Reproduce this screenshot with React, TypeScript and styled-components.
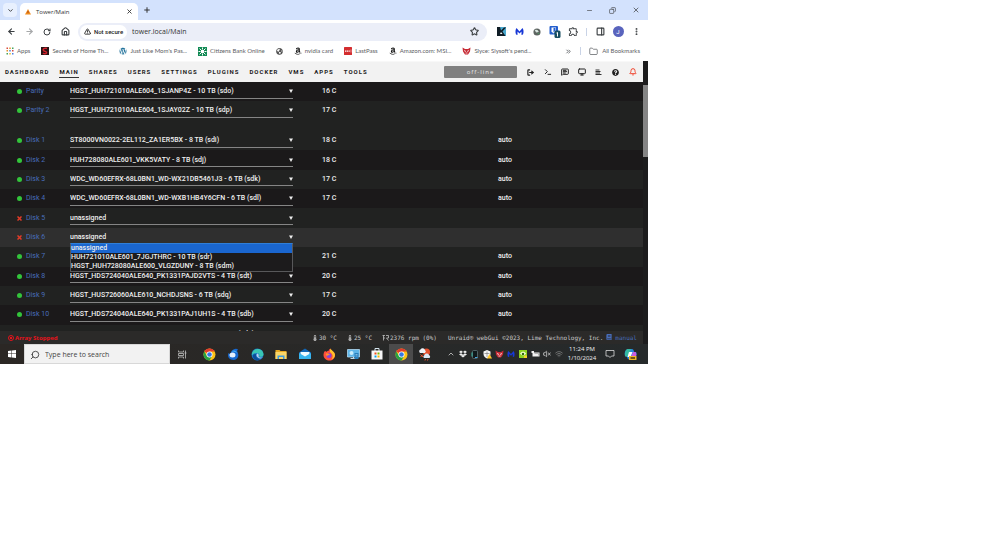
import React from "react";
import styled, { createGlobalStyle } from "styled-components";
import {
  ArrowLeft, ArrowRight, ChevronDown, ChevronUp, ChevronsRight, Copy, EllipsisVertical, Folder, House,
  Minus, PanelRight, Plus, RotateCw, Search, Star, Terminal, TriangleAlert, X, Bell, LogOut,
  MessageSquareText, Monitor, VolumeX, Wifi,
} from "lucide-react";
import { FaAmazon, FaBook, FaDropbox, FaQuestionCircle, FaWordpress, FaGlobeAmericas, FaThermometerHalf } from "react-icons/fa";
import { MdOutlineExtension } from "react-icons/md";

const Global = createGlobalStyle`
  *, *::before, *::after { box-sizing: border-box; }
  body { margin: 0; background: #fff; font-family: "Open Sans", "Noto Sans", sans-serif; }
  button, input, select { font: inherit; color: inherit; }
  button { display: inline-flex; align-items: center; justify-content: center; padding: 0; border: 0; background: none; }
  a { color: inherit; text-decoration: none; }
  svg { display: block; flex: none; }
`;

const Desktop = styled.div`
  width: 64.8%;
  display: flex;
  flex-direction: column;
  overflow: hidden;
`;

/* Browser chrome */
const TabStrip = styled.header`
  height: 20px;
  display: flex;
  align-items: center;
  padding-left: 3px;
  background: #d3e2fd;
  color: #333;
`;
const TabSearch = styled.button`
  && { width: 14px; height: 14px; border-radius: 4px; background: #e8f0fe; }
`;
const Tab = styled.div`
  align-self: flex-end;
  display: flex;
  align-items: center;
  gap: 5px;
  width: 118px;
  height: 17px;
  margin-left: 3px;
  padding: 0 5px;
  border-radius: 5px 5px 0 0;
  background: #fff;
  font: 6px/8px "Open Sans", sans-serif;
`;
const TabTitle = styled.span`
  flex: 1;
`;
const NewTab = styled.button`
  margin-left: 5px;
`;
const WindowButtons = styled.div`
  display: flex;
  margin-left: auto;
  padding-right: 1px;
`;
const WindowButton = styled.button`
  width: 23px;
  height: 20px;
`;
const Toolbar = styled.div`
  height: 23px;
  display: flex;
  align-items: center;
  padding: 0 3px 0 2px;
  background: #fff;
  color: #3c4043;
`;
const ToolButton = styled.button<{ $faded?: boolean }>`
  width: 18px;
  height: 18px;
  opacity: ${(p) => (p.$faded ? 0.45 : 1)};
`;
const Omnibox = styled.div`
  flex: 1;
  display: flex;
  align-items: center;
  gap: 5px;
  height: 18px;
  margin: 0 5px 0 4px;
  padding: 0 8px 0 2px;
  border-radius: 9px;
  background: #ebeef8;
`;
const SecurityChip = styled.button`
  && {
    gap: 3px;
    width: 47px;
    height: 14px;
    border-radius: 7px;
    background: #fff;
    font: 500 6px/8px Roboto, sans-serif;
    color: #222;
  }
`;
const Address = styled.input`
  flex: 1;
  min-width: 0;
  padding: 0;
  border: 0;
  outline: 0;
  background: none;
  && { font: 7px/10px "Open Sans", sans-serif; color: #333; }
`;
const Divider = styled.span`
  width: 1px;
  height: 8px;
  margin: 0 4px;
  background: #c9d3e6;
`;
const Avatar = styled.span`
  display: grid;
  place-items: center;
  width: 11px;
  height: 11px;
  border-radius: 50%;
  background: #5964bd;
  color: #fff;
  font: 6px/8px Roboto, sans-serif;
`;
const Bookmarks = styled.nav`
  height: 18px;
  display: flex;
  align-items: center;
  gap: 11px;
  padding: 0 8px 2px 6px;
  background: #fff;
  color: #5c6064;
  font: 6px/8px Lato, sans-serif;
`;
const Bookmark = styled.a`
  display: flex;
  align-items: center;
  gap: 3px;
  white-space: nowrap;
`;
const BookmarkEnd = styled.div`
  display: flex;
  align-items: center;
  gap: 4px;
  margin-left: auto;
`;

/* Web GUI */
const Gui = styled.div`
  display: flex;
  background: #1c1b1c;
`;
const Page = styled.main`
  flex: 1;
  min-width: 0;
`;
const Scrollbar = styled.div`
  width: 5px;
  padding-top: 24px;
  background: #1c1c1d;
`;
const Thumb = styled.div`
  height: 72px;
  background: #858585;
`;
const Menu = styled.nav`
  height: 21px;
  display: flex;
  align-items: center;
  gap: 10px;
  padding: 0 2px 0 5px;
  border-top: 1px solid #f8f8f8;
  background: #f2f2f2;
  color: #1c1b1b;
  font: 700 6px/10px Roboto, sans-serif;
  letter-spacing: 1px;
`;
const MenuLink = styled.a<{ $active?: boolean }>`
  border-bottom: 1px solid ${(p) => (p.$active ? "#333" : "transparent")};
`;
const ArrayState = styled.span`
  width: 73px;
  height: 12px;
  margin-left: auto;
  margin-bottom: 1px;
  border-radius: 1px;
  background: #808080;
  color: #e8e8e8;
  font: 6px/12px "Open Sans", sans-serif;
  text-align: center;
`;
const MenuIcons = styled.div`
  display: flex;
  margin-left: -5px;
`;
const MenuIcon = styled.button<{ $alert?: boolean }>`
  && { width: 17px; height: 12px; color: ${(p) => (p.$alert ? "#f0442e" : "#222")}; }
`;
const Devices = styled.section`
  height: 249px;
  overflow: hidden;
  background: #212221;
`;
const DeviceTable = styled.table<{ $height: number }>`
  width: 100%;
  height: ${(p) => p.$height}px;
  margin-bottom: 11px;
  table-layout: fixed;
  border-collapse: collapse;
  color: #f0f0f0;
  font: 500 7px/9px Roboto, sans-serif;
`;
const Row = styled.tr<{ $tone: "dark" | "light" | "hover" }>`
  background: ${(p) => ({ dark: "#1b191a", light: "#212221", hover: "#2f2f2f" })[p.$tone]};
`;
const Cell = styled.td<{ $width?: number }>`
  position: relative;
  width: ${(p) => (p.$width ? `${p.$width}px` : "auto")};
  padding: 0;
`;
const Device = styled.a`
  display: flex;
  align-items: center;
  gap: 4px;
  padding-left: 17px;
  color: #486dba;
  font-weight: 400;
`;
const Orb = styled.span`
  width: 5px;
  height: 5px;
  border-radius: 50%;
  background: #33c43b;
`;
const SelectBox = styled.label`
  display: flex;
  align-items: center;
  width: 223px;
  height: 14px;
  border-bottom: 1px solid #858585;
`;
const DiskSelect = styled.select`
  flex: 1;
  min-width: 0;
  height: 13px;
  padding: 1px 0 0;
  border: 0;
  outline: 0;
  appearance: none;
  background: none;
`;
const Popup = styled.ul`
  position: absolute;
  z-index: 1;
  top: 100%;
  left: 0;
  width: 223px;
  margin: -4px 0 0;
  padding: 0;
  border: 1px solid #58585a;
  border-top-color: #2f7fd8;
  background: #1c1b1c;
  list-style: none;
`;
const Option = styled.li<{ $selected?: boolean }>`
  height: 9px;
  line-height: 9px;
  background: ${(p) => (p.$selected ? "#1a66cf" : "transparent")};
`;
const Footer = styled.footer`
  height: 13px;
  display: flex;
  align-items: center;
  padding: 0 6px 0 8px;
  background: #2b2a29;
  color: #c8c8c8;
  font: 6px/8px "DejaVu Sans Mono", monospace;
  white-space: nowrap;
`;
const Stopped = styled.span`
  display: flex;
  align-items: center;
  gap: 1px;
  color: #e5131c;
  font: 700 6px/8px "Noto Sans", sans-serif;
`;
const Readings = styled.div`
  display: flex;
  gap: 10px;
  margin-left: auto;
  margin-right: 11px;
`;
const Reading = styled.span`
  display: flex;
  align-items: center;
  gap: 1px;
`;
const Manual = styled.a`
  display: flex;
  gap: 3px;
  margin-left: 3px;
  color: #486dba;
`;

/* Windows taskbar */
const Taskbar = styled.footer`
  height: 20px;
  display: flex;
  align-items: center;
  background: linear-gradient(90deg, #2b2724, #262a2b);
  color: #f0f0f0;
`;
const TaskButton = styled.button<{ $active?: boolean }>`
  width: 24px;
  height: 20px;
  && { background: ${(p) => (p.$active ? "#4b4b4b" : "none")}; }
`;
const SearchBox = styled.label`
  display: flex;
  align-items: center;
  gap: 5px;
  width: 146px;
  height: 20px;
  padding: 2px 0 0 5px;
  border: 1px solid #d8d8d8;
  background: #f2f2f2;
  color: #333;
`;
const SearchInput = styled.input`
  width: 100px;
  padding: 0;
  border: 0;
  outline: 0;
  background: none;
  && { font: 7px/10px "Open Sans", sans-serif; }
  &::placeholder { color: #444; opacity: 1; }
`;
const Apps = styled.div`
  display: flex;
  margin-left: 3px;
`;
const Tray = styled.div`
  display: flex;
  align-items: center;
  margin-left: auto;
  padding-right: 7px;
`;
const TrayButton = styled.button`
  width: 12px;
  height: 20px;
`;
const Clock = styled.time`
  width: 34px;
  font: 6px/9px "Open Sans", sans-serif;
  text-align: center;
`;
const WideTrayButton = styled.button`
  width: 21px;
  height: 20px;
`;

const ChromeLogo = () => (
  <svg width="13" height="13" viewBox="0 0 26 26">
    <circle cx="13" cy="13" r="12" fill="#fbc116" />
    <path d="M13 13 2.6 7A12 12 0 0 1 23.4 7H13Z" fill="#e33b2e" />
    <path d="M2.6 7A12 12 0 0 0 13 25l5-9-5 3-5-3Z" fill="#27a243" />
    <circle cx="13" cy="13" r="6" fill="#fff" />
    <circle cx="13" cy="13" r="4.6" fill="#3478e5" />
  </svg>
);
const Thunderbird = () => (
  <svg width="13" height="13" viewBox="0 0 26 26">
    <path d="M13 3c3-2 7-2 9 0l-2 3c5 7 3 18-7 18C5 24 0 18 3 10l4 3c0-5 2-8 6-10Z" fill="#1769d1" />
    <ellipse cx="11" cy="14" rx="6" ry="5" fill="#e6f1ff" />
    <path d="M9 7c5-4 10-1 11 3-3-2-6-3-11-3Z" fill="#45b0f5" />
  </svg>
);
const Edge = () => (
  <svg width="13" height="13" viewBox="0 0 26 26">
    <circle cx="13" cy="13" r="12" fill="#1773c6" />
    <path d="M2 11C4-1 24-1 25 13c0 5-7 6-9 3 2-2 0-6-4-6-5 0-8 2-10 5Z" fill="#39c6b5" />
    <path d="M11 12c-3 4 0 11 9 9-4 5-12 4-15-1-3-6 0-9 6-8Z" fill="#0d4c98" />
    <path d="M12 11c4 0 4 4 3 6 2 3 7 3 9 1-2 3-7 4-10 1-3-2-4-5-2-8Z" fill="#fff" opacity=".7" />
  </svg>
);
const Explorer = () => (
  <svg width="12" height="12" viewBox="0 0 24 24">
    <path d="M1 4h8l2 2h12v16H1Z" fill="#e9a920" />
    <path d="M1 8h22v14H1Z" fill="#fbd667" />
    <path d="M5 15h14v7h-3v-4H8v4H5Z" fill="#3e9bdf" />
  </svg>
);
const Mail = () => (
  <svg width="12" height="12" viewBox="0 0 24 24">
    <path d="m0 9 12-8 12 8v13H0Z" fill="#1268b8" />
    <path d="M3 8h18v5l-9 6-9-6Z" fill="#f2fbff" />
    <path d="m0 10 12 7L24 10v12H0Z" fill="#39b5ee" />
  </svg>
);
const Firefox = () => (
  <svg width="13" height="13" viewBox="0 0 26 26">
    <path d="M4 6c1 0 2 1 2 2 2-2 4-3 6-3 0-2 1-3 3-4 0 4 8 5 9 13 0 7-5 11-11 11S1 21 1 14c0-3 1-6 3-8Z" fill="#ff4f3a" />
    <path d="M15 1c1 4 9 6 9 13 0 4-3 8-7 9 4-5 3-11-2-14-2-2-1-5 0-8Z" fill="#ffc229" />
    <circle cx="12" cy="15" r="5" fill="#8546d9" />
    <path d="M6 11c4-2 6 1 8 2-2 2-5 1-6 3-2-1-3-3-2-5Z" fill="#ff922e" />
  </svg>
);
const Computer = () => (
  <svg width="13" height="12" viewBox="0 0 26 24">
    <path d="M1 3h24v15H1Z" fill="#5eb5e8" stroke="#b7dff5" strokeWidth="1.5" />
    <path d="M7 21h12M13 18v3" stroke="#c6dbe6" strokeWidth="2" />
    <circle cx="9" cy="10" r="4" fill="#c9ecfb" />
    <path d="M15 10h8v12h-8Z" fill="#277fbd" />
    <path d="M17 13h4m-4 3h4" stroke="#d6f1ff" />
  </svg>
);
const Store = () => (
  <svg width="12" height="12" viewBox="0 0 24 24">
    <path d="M8 6V1h8v5" fill="none" stroke="#d5e6ef" strokeWidth="2" />
    <path d="M1 5h22v18H1Z" fill="#f7f7f7" />
    <path d="M7 9h4v4H7Z" fill="#f25022" /><path d="M13 9h4v4h-4Z" fill="#7fba00" />
    <path d="M7 15h4v4H7Z" fill="#00a4ef" /><path d="M13 15h4v4h-4Z" fill="#ffb900" />
  </svg>
);
const Weather = () => (
  <svg width="14" height="13" viewBox="0 0 28 26">
    <circle cx="17" cy="8" r="7" fill="#e5502f" />
    <path d="M4 10a4 4 0 0 1 1-7 5 5 0 0 1 9 1 4 4 0 0 1 0 6Z" fill="#eef1f7" />
    <path d="M12 20a4 4 0 0 1 1-6 5 5 0 0 1 9 0 4 4 0 0 1 1 6Z" fill="#dbe7f6" />
    <path d="m5 13 5 5m0-5-5 5M15 22l-1 3m6-3-1 3" stroke="#e5502f" strokeWidth="2" />
  </svg>
);
const Copilot = () => (
  <svg width="13" height="13" viewBox="0 0 26 26">
    <path d="M8 2h8c4 0 3 6 5 6h3c3 4-1 15-6 15h-8c-4 0-3-6-5-6H3C-1 12 3 2 8 2Z" fill="#2584df" />
    <path d="M8 2h6L9 17H3C0 12 3 2 8 2Z" fill="#34b9a0" />
    <path d="M18 8h5c4 4 0 15-5 15h-6Z" fill="#cb5ce1" />
    <path d="M10 8h7l-4 10H7Z" fill="#fff" />
    <path d="M10 16h15v8H10Z" fill="#f0b62b" /><path d="M13 20h9" stroke="#49320b" strokeWidth="3" />
  </svg>
);
const WindowsLogo = () => (
  <svg width="8" height="8" viewBox="0 0 16 16"><path d="M0 2 7 1v6H0Zm8-1 8-1v7H8ZM0 8h7v7l-7-1Zm8 0h8v8l-8-1Z" fill="#fff" /></svg>
);
const TaskView = () => (
  <svg width="9" height="9" viewBox="0 0 18 18" fill="none" stroke="#c9c9c9" strokeWidth="1.5">
    <path d="M1 1v3h10V1M1 17v-3h10v3M1 7h10v4H1ZM15 1v16M13 6h4" />
  </svg>
);
const Malwarebytes = ({ size = 9 }: { size?: number }) => (
  <svg width={size} height={size} viewBox="0 0 18 18"><path d="M2 15C0 9 1 5 3 2l6 7 6-7c2 3 3 7 1 13l-3 1V9l-4 4-4-4v7Z" fill="#1737d6" /></svg>
);
const Fox = () => (
  <svg width="9" height="8" viewBox="0 0 18 16">
    <path d="m1 1 5 3h6l5-3-1 8-4 6H6L2 9Z" fill="#c72b35" /><path d="m4 7 4 2m6-2-4 2M7 12h4" stroke="#fff" strokeWidth="1.5" />
  </svg>
);
const AppsGrid = () => (
  <svg width="8" height="8" viewBox="0 0 16 16">
    <path d="M1 1h3v3H1Zm11 5h3v3h-3Z" fill="#d8483c" /><path d="M6.500 1h3v3h-3ZM1 6h3v3H1Z" fill="#e39526" />
    <path d="M12 1h3v3h-3ZM1 12h3v3H1Z" fill="#43a35b" /><path d="M6.500 6h3v3h-3Zm5.500 6h3v3h-3Z" fill="#4b80df" />
    <path d="M6.500 12h3v3h-3Z" fill="#edb72c" />
  </svg>
);
const SecretsIcon = () => (
  <svg width="8" height="8" viewBox="0 0 16 16"><path d="M0 0h16v16H0Z" fill="#251414" /><path d="M12 3C7 1 3 4 5 7s7 1 6 5c-1 2-5 2-7 0" fill="none" stroke="#d3202d" strokeWidth="3" /></svg>
);
const CitizensIcon = () => (
  <svg width="9" height="9" viewBox="0 0 18 18"><path d="M0 0h18v18H0Z" fill="#128a55" /><path d="M9 1v4m0 8v4M1 9h4m8 0h4M3 3l3 3m6 6 3 3M3 15l3-3m6-6 3-3" stroke="#fff" strokeWidth="2" /><path d="M6 6h6v6H6Z" fill="#fff" /></svg>
);
const LastPassIcon = () => (
  <svg width="8" height="8" viewBox="0 0 16 16"><rect width="16" height="16" rx="1" fill="#d32d2f" /><path d="M2 8h10" stroke="#fff" strokeWidth="2.500" strokeDasharray="2.500 1" /><path d="M14 5v6" stroke="#fff" /></svg>
);
const Kindle = () => (
  <svg width="9" height="9" viewBox="0 0 18 18"><path d="M0 0h18v18H0Z" fill="#4aa9cf" /><path d="M0 0h6l2 7 6-6h4l-7 8 6 9H0Z" fill="#101d26" /><path d="m8 10 3 4H6Z" fill="#f2f8fa" /></svg>
);
const GrayDisc = () => (
  <svg width="8" height="8" viewBox="0 0 18 18"><circle cx="9" cy="9" r="8" fill="#5d6461" /><path d="M4 5c5-2 7 0 9 4l-6 1Z" fill="#d7e5df" /><path d="M10 11h4l-2 3Z" fill="#41a35c" /></svg>
);
const BitwardenBadge = () => (
  <svg width="12" height="12" viewBox="0 0 24 24"><rect x="1" width="17" height="17" rx="2" fill="#245fce" /><path d="M5 3h9v7l-5 5-4-4Z" fill="#fff" /><path d="M9 4h4v5l-4 4Z" fill="#245fce" /><rect x="11" y="9" width="12" height="15" rx="3" fill="#164d61" /><path d="m15 14 2-1v8" stroke="#fff" strokeWidth="2" fill="none" /></svg>
);
const TowerIcon = () => (
  <svg width="6" height="6" viewBox="0 0 12 12"><path d="m6 0 6 11H0Z" fill="#ef8b1d" /><path d="M5 4h2v4H5Z" fill="#a94816" /></svg>
);
const LogIcon = () => (
  <svg width="7" height="7" viewBox="0 0 14 14" stroke="#333" strokeWidth="2"><path d="M1 2h8M1 5h10M1 8h9M1 11h12" /></svg>
);
const RedCross = () => (
  <svg width="5" height="5" viewBox="0 0 10 10"><path d="m1 1 8 8m0-8L1 9" stroke="#e03b28" strokeWidth="3" /></svg>
);
const DownTriangle = () => (
  <svg width="4" height="4" viewBox="0 0 8 8"><path d="M0 1h8L4 8Z" fill="#f0f0f0" /></svg>
);
const StopIcon = () => (
  <svg width="6" height="6" viewBox="0 0 12 12"><circle cx="6" cy="6" r="5" fill="none" stroke="#e5131c" strokeWidth="2" /><path d="M4 4h4v4H4Z" fill="#e5131c" /></svg>
);
const RpmIcon = () => (
  <svg width="7" height="6" viewBox="0 0 14 12" fill="none" stroke="#c8c8c8" strokeWidth="1.5"><path d="M1 1h5M3 1v10M3 6h3M8 1h5v5H9l4 5" /></svg>
);
const BatteryIcon = () => (
  <svg width="9" height="8" viewBox="0 0 18 16"><path d="M3 5h14v8H3Z" fill="#f0f0f0" /><path d="M1 2h5v4H1Z" fill="#f0f0f0" /><path d="M7 7h8v4" fill="none" stroke="#777" /></svg>
);
const PhoneIcon = () => (
  <svg width="8" height="9" viewBox="0 0 16 18"><rect x="3" y="1" width="10" height="16" rx="2" fill="#10191c" stroke="#61757b" strokeWidth="1.500" /><path d="M2 5v8" stroke="#35b4a2" strokeWidth="2" /><path d="M8 15h5" stroke="#48a7e3" strokeWidth="2" /></svg>
);
const NvidiaIcon = () => (
  <svg width="8" height="8" viewBox="0 0 16 16"><path d="M0 0h16v16H0Z" fill="#8cd321" /><path d="M2 7c4-5 9-4 12 0-3 5-8 5-12 0Z" fill="#f5ffd9" /><circle cx="8" cy="8" r="2.500" fill="#346c10" /><path d="M10 11h6v5h-6Z" fill="#f3d427" /></svg>
);
const DefenderIcon = () => (
  <svg width="9" height="9" viewBox="0 0 18 18"><path d="m8 0 7 3v5c0 4-3 7-7 9-4-2-7-5-7-9V3Z" fill="#f5f5f5" /><path d="M8 3v11M3 7h10" stroke="#555" /><path d="m13 8 5 9H8Z" fill="#ffc629" /></svg>
);
const NotifyIcon = () => (
  <svg width="10" height="10" viewBox="0 0 20 20"><path d="M2 3h16v11h-5l-3 3-3-3H2Z" fill="none" stroke="#e5e5e5" strokeWidth="1.500" /></svg>
);

const bookmarks = [
  { icon: <AppsGrid />, label: "Apps" },
  { icon: <SecretsIcon />, label: "Secrets of Home Th..." },
  { icon: <FaWordpress size={8} color="#23739c" />, label: "Just Like Mom's Pas..." },
  { icon: <CitizensIcon />, label: "Citizens Bank Online" },
  { icon: <FaGlobeAmericas size={7} color="#555" />, label: "" },
  { icon: <FaAmazon size={8} color="#111" />, label: "nvidia card" },
  { icon: <LastPassIcon />, label: "LastPass" },
  { icon: <FaAmazon size={8} color="#111" />, label: "Amazon.com: MSI..." },
  { icon: <Fox />, label: "Slyce: Slysoft's pend..." },
];

const menu = ["DASHBOARD", "MAIN", "SHARES", "USERS", "SETTINGS", "PLUGINS", "DOCKER", "VMS", "APPS", "TOOLS"];

type Disk = { name: string; id: string; temp?: string; auto?: boolean; open?: boolean };

const parity: Disk[] = [
  { name: "Parity", id: "HGST_HUH721010ALE604_1SJANP4Z - 10 TB (sdo)", temp: "16 C" },
  { name: "Parity 2", id: "HGST_HUH721010ALE604_1SJAY02Z - 10 TB (sdp)", temp: "17 C" },
];

const disks: Disk[] = [
  { name: "Disk 1", id: "ST8000VN0022-2EL112_ZA1ER5BX - 8 TB (sdi)", temp: "18 C", auto: true },
  { name: "Disk 2", id: "HUH728080ALE601_VKK5VATY - 8 TB (sdj)", temp: "18 C", auto: true },
  { name: "Disk 3", id: "WDC_WD60EFRX-68L0BN1_WD-WX21DB5461J3 - 6 TB (sdk)", temp: "17 C", auto: true },
  { name: "Disk 4", id: "WDC_WD60EFRX-68L0BN1_WD-WXB1HB4Y6CFN - 6 TB (sdl)", temp: "17 C", auto: true },
  { name: "Disk 5", id: "unassigned" },
  { name: "Disk 6", id: "unassigned", open: true },
  { name: "Disk 7", id: "unassigned", temp: "21 C", auto: true },
  { name: "Disk 8", id: "HGST_HDS724040ALE640_PK1331PAJD2VTS - 4 TB (sdt)", temp: "20 C", auto: true },
  { name: "Disk 9", id: "HGST_HUS726060ALE610_NCHDJSNS - 6 TB (sdq)", temp: "17 C", auto: true },
  { name: "Disk 10", id: "HGST_HDS724040ALE640_PK1331PAJ1UH1S - 4 TB (sdb)", temp: "20 C", auto: true },
  { name: "Disk 11", id: "HGST_HDS724040ALE640_PK2331PAHU2SVT - 4 TB (sdc)", temp: "20 C", auto: true },
];

const spare = ["unassigned", "HUH721010ALE601_7JGJTHRC - 10 TB (sdr)", "HGST_HUH728080ALE600_VLGZDUNY - 8 TB (sdm)"];

function DiskRows({ list, firstTone }: { list: Disk[]; firstTone: number }) {
  return (
    <tbody>
      {list.map((d, i) => (
        <Row key={d.name} $tone={d.open ? "hover" : (i + firstTone) % 2 ? "light" : "dark"}>
          <Cell $width={70}>
            <Device href="#">
              {d.temp ? <Orb /> : <RedCross />}
              {d.name}
            </Device>
          </Cell>
          <Cell $width={252}>
            <SelectBox>
              <DiskSelect aria-label={d.name} defaultValue={d.id}>
                <option>{d.id}</option>
              </DiskSelect>
              <DownTriangle />
            </SelectBox>
            {d.open && (
              <Popup role="listbox">
                {spare.map((s, n) => (
                  <Option key={s} role="option" aria-selected={n === 0} $selected={n === 0}>{s}</Option>
                ))}
              </Popup>
            )}
          </Cell>
          <Cell $width={176}>{d.temp}</Cell>
          <Cell>{d.auto && "auto"}</Cell>
        </Row>
      ))}
    </tbody>
  );
}

export default function App() {
  return (
    <>
      <Global />
      <Desktop>
        <TabStrip>
          <TabSearch aria-label="Search tabs"><ChevronDown size={7} strokeWidth={3} /></TabSearch>
          <Tab>
            <TowerIcon />
            <TabTitle>Tower/Main</TabTitle>
            <button aria-label="Close tab"><X size={7} strokeWidth={3} /></button>
          </Tab>
          <NewTab aria-label="New tab"><Plus size={8} strokeWidth={3} /></NewTab>
          <WindowButtons>
            <WindowButton aria-label="Minimize"><Minus size={7} /></WindowButton>
            <WindowButton aria-label="Restore"><Copy size={7} transform="scale(-1 1)" /></WindowButton>
            <WindowButton aria-label="Close"><X size={8} /></WindowButton>
          </WindowButtons>
        </TabStrip>
        <Toolbar>
          <ToolButton aria-label="Back"><ArrowLeft size={9} strokeWidth={3} /></ToolButton>
          <ToolButton aria-label="Forward" $faded><ArrowRight size={9} strokeWidth={3} /></ToolButton>
          <ToolButton aria-label="Reload"><RotateCw size={8} strokeWidth={3} /></ToolButton>
          <ToolButton aria-label="Home"><House size={9} strokeWidth={3} /></ToolButton>
          <Omnibox>
            <SecurityChip><TriangleAlert size={7} strokeWidth={3} />Not secure</SecurityChip>
            <Address aria-label="Address" defaultValue="tower.local/Main" />
            <button aria-label="Bookmark"><Star size={9} strokeWidth={3} /></button>
          </Omnibox>
          <ToolButton aria-label="Kindle"><Kindle /></ToolButton>
          <ToolButton aria-label="Malwarebytes"><Malwarebytes /></ToolButton>
          <ToolButton aria-label="Web guard"><GrayDisc /></ToolButton>
          <ToolButton aria-label="Passwords"><BitwardenBadge /></ToolButton>
          <ToolButton aria-label="Extensions"><MdOutlineExtension size={11} /></ToolButton>
          <Divider />
          <ToolButton aria-label="Side panel"><PanelRight size={9} strokeWidth={3} /></ToolButton>
          <ToolButton aria-label="Profile"><Avatar>J</Avatar></ToolButton>
          <ToolButton aria-label="Menu"><EllipsisVertical size={9} strokeWidth={3} /></ToolButton>
        </Toolbar>
        <Bookmarks>
          {bookmarks.map((b, i) => (
            <Bookmark key={i} href="#">{b.icon}{b.label}</Bookmark>
          ))}
          <BookmarkEnd>
            <ChevronsRight size={7} strokeWidth={3} />
            <Divider />
            <Folder size={9} />
            All Bookmarks
          </BookmarkEnd>
        </Bookmarks>
        <Gui>
          <Page>
            <Menu>
              {menu.map((m) => <MenuLink key={m} href="#" $active={m === "MAIN"}>{m}</MenuLink>)}
              <ArrayState>off-line</ArrayState>
              <MenuIcons>
                <MenuIcon aria-label="Log out"><LogOut size={7} strokeWidth={4} /></MenuIcon>
                <MenuIcon aria-label="Terminal"><Terminal size={8} strokeWidth={3} /></MenuIcon>
                <MenuIcon aria-label="Feedback"><MessageSquareText size={8} strokeWidth={3} /></MenuIcon>
                <MenuIcon aria-label="Info"><Monitor size={8} strokeWidth={3} /></MenuIcon>
                <MenuIcon aria-label="Log"><LogIcon /></MenuIcon>
                <MenuIcon aria-label="Help"><FaQuestionCircle size={7} /></MenuIcon>
                <MenuIcon aria-label="Alerts" $alert><Bell size={8} strokeWidth={3} /></MenuIcon>
              </MenuIcons>
            </Menu>
            <Devices>
              <DeviceTable $height={38}><DiskRows list={parity} firstTone={0} /></DeviceTable>
              <DeviceTable $height={213}><DiskRows list={disks} firstTone={1} /></DeviceTable>
            </Devices>
            <Footer>
              <Stopped><StopIcon />Array Stopped</Stopped>
              <Readings>
                <Reading><FaThermometerHalf size={6} />30 °C</Reading>
                <Reading><FaThermometerHalf size={6} />25 °C</Reading>
                <Reading><RpmIcon />2376 rpm (0%)</Reading>
              </Readings>
              Unraid® webGui ©2023, Lime Technology, Inc.
              <Manual href="#"><FaBook size={6} />manual</Manual>
            </Footer>
          </Page>
          <Scrollbar><Thumb /></Scrollbar>
        </Gui>
        <Taskbar>
          <TaskButton aria-label="Start"><WindowsLogo /></TaskButton>
          <SearchBox>
            <Search size={10} transform="scale(-1 1)" />
            <SearchInput aria-label="Search" placeholder="Type here to search" />
          </SearchBox>
          <TaskButton aria-label="Task view"><TaskView /></TaskButton>
          <Apps>
            <TaskButton aria-label="Chrome"><ChromeLogo /></TaskButton>
            <TaskButton aria-label="Thunderbird"><Thunderbird /></TaskButton>
            <TaskButton aria-label="Edge"><Edge /></TaskButton>
            <TaskButton aria-label="File Explorer"><Explorer /></TaskButton>
            <TaskButton aria-label="Mail"><Mail /></TaskButton>
            <TaskButton aria-label="Firefox"><Firefox /></TaskButton>
            <TaskButton aria-label="Computer"><Computer /></TaskButton>
            <TaskButton aria-label="Store"><Store /></TaskButton>
            <TaskButton aria-label="Chrome window" $active><ChromeLogo /></TaskButton>
            <TaskButton aria-label="Weather"><Weather /></TaskButton>
          </Apps>
          <Tray>
            <TrayButton aria-label="Hidden icons"><ChevronUp size={8} /></TrayButton>
            <TrayButton aria-label="Dropbox"><FaDropbox size={8} /></TrayButton>
            <TrayButton aria-label="Phone"><PhoneIcon /></TrayButton>
            <TrayButton aria-label="Security"><DefenderIcon /></TrayButton>
            <TrayButton aria-label="Fox"><Fox /></TrayButton>
            <TrayButton aria-label="Malwarebytes"><Malwarebytes size={8} /></TrayButton>
            <TrayButton aria-label="Graphics"><NvidiaIcon /></TrayButton>
            <TrayButton aria-label="Battery"><BatteryIcon /></TrayButton>
            <TrayButton aria-label="Volume"><VolumeX size={8} /></TrayButton>
            <TrayButton aria-label="Network"><Wifi size={8} strokeWidth={1} /></TrayButton>
            <Clock>11:24 PM<br />1/10/2024</Clock>
            <WideTrayButton aria-label="Notifications"><NotifyIcon /></WideTrayButton>
            <WideTrayButton aria-label="Copilot"><Copilot /></WideTrayButton>
          </Tray>
        </Taskbar>
      </Desktop>
    </>
  );
}
